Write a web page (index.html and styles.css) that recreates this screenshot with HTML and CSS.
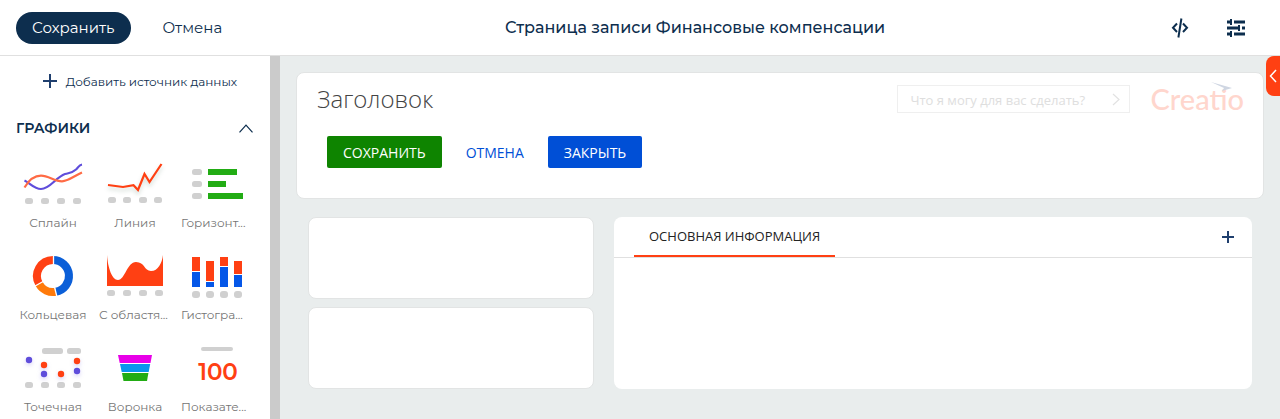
FILE: index.html
```html
<!DOCTYPE html>
<html lang="ru">
<head>
<meta charset="utf-8">
<meta name="viewport" content="width=device-width, initial-scale=1">
<title>Страница записи Финансовые компенсации</title>
<link rel="stylesheet" href="styles.css">
</head>
<body class="page">
<header class="topbar">
  <button class="pill pill-primary" type="button">Сохранить</button>
  <button class="pill" type="button">Отмена</button>
  <h1 class="topbar-title">Страница записи Финансовые компенсации</h1>
  <div class="topbar-tools">
    <button class="tool" type="button" aria-label="Исходный код">
      <svg width="18" height="20" viewBox="0 0 18 20" fill="none" stroke="#0d2e4e" stroke-width="2"><path d="M6 5.500L2 9.800L6 14M12 5.500L16 9.800L12 14M10.400 .5L7.400 19.500"/></svg>
    </button>
    <button class="tool" type="button" aria-label="Настройки">
      <svg width="18" height="18" viewBox="0 0 18 18" fill="#0d2e4e"><path d="M0 1.500h3v3H0zM3 0h2v6H3zM7 1.500h11v3H7zM0 7.500h11v3H0zM11 6h2v6h-2zM15 7.500h3v3h-3zM0 13.500h3v3H0zM3 12h2v6H3zM7 13.500h11v3H7z"/></svg>
    </button>
  </div>
</header>
<div class="workspace">
  <aside class="sidebar">
    <button class="add-source" type="button">
      <svg width="14" height="14" viewBox="0 0 14 14" stroke="#1f3f6e" stroke-width="2"><path d="M7 0v14M0 7h14"/></svg>
      Добавить источник данных
    </button>
    <button class="group-head" type="button" aria-expanded="true">
      ГРАФИКИ
      <svg width="14" height="9" viewBox="0 0 14 9" fill="none" stroke="#0d2e4e" stroke-width="1.200"><path d="M.5 8.300L7 1.200L13.500 8.300"/></svg>
    </button>
    <ul class="tiles">
      <li class="tile">
        <svg class="tile-icon" viewBox="0 0 72 54" fill="none">
          <path d="M7.500 20.500C13 23 17 29 24 29C33 29 39 17 48 14C54 12.500 55 13 59 9.500C62 6.500 62 5 65 4.500" stroke="#5f4ddb" stroke-width="2.200"/>
          <path d="M7.500 27.500C12 20 17 15.700 24 15.700C32 15.700 37 21.300 45 21.300C51 21.300 58 15.500 65 12.500" stroke="#ff6b45" stroke-width="2.200"/>
          <g fill="#d0d0d0"><rect x="8" y="38" width="8" height="6" rx="2.500"/><rect x="24" y="38" width="8" height="6" rx="2.500"/><rect x="40" y="38" width="8" height="6" rx="2.500"/><rect x="56" y="38" width="8" height="6" rx="2.500"/></g>
        </svg>
        <span class="tile-label">Сплайн</span>
      </li>
      <li class="tile">
        <svg class="tile-icon" viewBox="0 0 72 54" fill="none">
          <path class="glow" d="M9 25L24 27L34.500 25.200L39 30L45.500 14L50.500 22L62.500 4" stroke="#ff4013" stroke-width="2.200"/>
          <g fill="#d0d0d0"><rect x="9" y="37" width="8" height="6" rx="2.500"/><rect x="24" y="37" width="8" height="6" rx="2.500"/><rect x="40" y="37" width="8" height="6" rx="2.500"/><rect x="55" y="37" width="8" height="6" rx="2.500"/></g>
        </svg>
        <span class="tile-label">Линия</span>
      </li>
      <li class="tile">
        <svg class="tile-icon" viewBox="0 0 72 54">
          <g fill="#d0d0d0"><rect x="11" y="9" width="10" height="6" rx="2.500"/><rect x="11" y="21" width="10" height="6" rx="2.500"/><rect x="11" y="33" width="10" height="6" rx="2.500"/></g>
          <path fill="#22ac14" d="M27 9h29v6H27zM27 21h18v6H27zM27 33h35v6H27z"/>
        </svg>
        <span class="tile-label tile-label-cut">Горизонт...</span>
      </li>
      <li class="tile">
        <svg class="tile-icon" viewBox="0 0 72 54" fill="none">
          <path d="M36 8A16 16 0 0 1 38.800 39.750" stroke="#0b5fd8" stroke-width="8"/>
          <path d="M38.800 39.750A16 16 0 0 1 22.140 32" stroke="#ff7a0a" stroke-width="8"/>
          <path d="M22.140 32A16 16 0 0 1 36 8" stroke="#ff4013" stroke-width="8"/>
          <path d="M36.500 3V13M37.500 35L40 45M27 29L18 34" stroke="#fff" stroke-width="1.300"/>
        </svg>
        <span class="tile-label">Кольцевая</span>
      </li>
      <li class="tile">
        <svg class="tile-icon" viewBox="0 0 72 54">
          <path fill="#ff4013" d="M8 3C9 16 13 28 19 28C26 28 28 10 37 10C46 10 45 19 52 19C59 19 63 11 64 3V34H8z"/>
          <g fill="#d0d0d0"><rect x="8" y="38" width="8" height="6" rx="2.500"/><rect x="24" y="38" width="8" height="6" rx="2.500"/><rect x="40" y="38" width="8" height="6" rx="2.500"/><rect x="56" y="38" width="8" height="6" rx="2.500"/></g>
        </svg>
        <span class="tile-label tile-label-cut">С областя...</span>
      </li>
      <li class="tile">
        <svg class="tile-icon" viewBox="0 0 72 54">
          <path fill="#ff4013" d="M11 5h8v14h-8zM25 9h8v20h-8zM39 5h8v9h-8zM53 9h8v13h-8z"/>
          <path fill="#0557e8" d="M11 20h8v15h-8zM25 30h8v5h-8zM39 15h8v20h-8zM53 23h8v12h-8z"/>
          <g fill="#d0d0d0"><rect x="11" y="39" width="8" height="7" rx="3"/><rect x="25" y="39" width="8" height="7" rx="3"/><rect x="39" y="39" width="8" height="7" rx="3"/><rect x="53" y="39" width="8" height="7" rx="3"/></g>
        </svg>
        <span class="tile-label tile-label-cut">Гистогра...</span>
      </li>
      <li class="tile">
        <svg class="tile-icon" viewBox="0 0 72 54">
          <g fill="#d0d0d0"><rect x="25" y="4" width="21" height="6" rx="2.500"/><rect x="50" y="4" width="14" height="6" rx="2.500"/><rect x="8" y="38" width="8" height="6" rx="2.500"/><rect x="24" y="38" width="8" height="6" rx="2.500"/><rect x="40" y="38" width="8" height="6" rx="2.500"/><rect x="56" y="38" width="8" height="6" rx="2.500"/></g>
          <g class="glow-violet" fill="#5f4ddb"><circle cx="12" cy="16" r="3.200"/><circle cx="27" cy="30" r="3.200"/><circle cx="60" cy="27" r="3.200"/></g>
          <g class="glow-violet" fill="#ff4013"><circle cx="27" cy="21" r="3.200"/><circle cx="44" cy="30" r="3.200"/><circle cx="60" cy="17" r="3.200"/></g>
        </svg>
        <span class="tile-label">Точечная</span>
      </li>
      <li class="tile">
        <svg class="tile-icon" viewBox="0 0 72 54">
          <path fill="#e800e8" d="M19 11H53L51.500 19H20.700z"/>
          <path fill="#0a94ee" d="M21 20H51.200L49.700 28H22.700z"/>
          <path fill="#22ac14" d="M23 29H49.400L48 37H24.500z"/>
        </svg>
        <span class="tile-label">Воронка</span>
      </li>
      <li class="tile">
        <svg class="tile-icon" viewBox="0 0 72 54">
          <rect x="20" y="3" width="32" height="4" rx="2" fill="#d0d0d0"/>
          <text class="metric" x="37" y="36" text-anchor="middle">100</text>
        </svg>
        <span class="tile-label tile-label-cut">Показате...</span>
      </li>
    </ul>
  </aside>
  <main class="canvas">
    <button class="drawer-toggle" type="button" aria-label="Открыть панель">
      <svg width="8" height="14" viewBox="0 0 8 14" fill="none" stroke="#fff" stroke-width="1.500"><path d="M7 1L1.500 7L7 13"/></svg>
    </button>
    <section class="card page-head">
      <div class="head-row">
        <h2 class="head-title">Заголовок</h2>
        <form class="command">
          <input class="command-input" type="text" placeholder="Что я могу для вас сделать?" aria-label="Что я могу для вас сделать?">
          <button class="command-run" type="button" aria-label="Выполнить">
            <svg width="8" height="13" viewBox="0 0 8 13" fill="none" stroke="#e2e2e2" stroke-width="1.200"><path d="M1 1L7 6.500L1 12"/></svg>
          </button>
        </form>
        <div class="logo">Creatio<svg class="logo-arrow" width="21" height="9" viewBox="0 0 21 9" fill="#cfd6e2"><path d="M0 0L21 6L11 9L13 6z"/></svg></div>
      </div>
      <div class="actions">
        <button class="action action-save" type="button">СОХРАНИТЬ</button>
        <button class="action" type="button">ОТМЕНА</button>
        <button class="action action-close" type="button">ЗАКРЫТЬ</button>
      </div>
    </section>
    <div class="columns">
      <div class="side-cards">
        <section class="card slot"></section>
        <section class="card slot"></section>
      </div>
      <section class="tab-panel">
        <div class="tab-bar">
          <button class="tab" type="button">ОСНОВНАЯ ИНФОРМАЦИЯ</button>
          <button class="tab-add" type="button" aria-label="Добавить вкладку">
            <svg width="12" height="12" viewBox="0 0 12 12" stroke="#1f3f6e" stroke-width="2"><path d="M6 0v12M0 6h12"/></svg>
          </button>
        </div>
      </section>
    </div>
  </main>
</div>
</body>
</html>
```

FILE: styles.css
```css
* { box-sizing: border-box; }

.page {
  margin: 0;
  min-height: 100vh;
  display: flex;
  flex-direction: column;
  overflow: hidden;
  background: #fff;
  color: #0d2e4e;
  font-family: Montserrat, Inter, "Open Sans", sans-serif;
}

button {
  margin: 0;
  padding: 0;
  border: 0;
  background: none;
  color: inherit;
  font: inherit;
  cursor: pointer;
}

h1, h2, ul { margin: 0; padding: 0; }
svg { display: block; flex: none; }

.topbar {
  display: flex;
  align-items: center;
  gap: 16px;
  height: 56px;
  padding: 0 16px;
  border-bottom: 1px solid #e0e0e0;
}
.pill {
  height: 32px;
  padding: 0 16px;
  border-radius: 16px;
  font-size: 15px;
  white-space: nowrap;
}
.pill-primary { background: #0d2e4e; color: #fff; }
.topbar-title {
  flex: 1;
  text-align: center;
  font-size: 16px;
  font-weight: 500;
  white-space: nowrap;
}
.topbar-tools { display: flex; }
.tool {
  display: flex;
  align-items: center;
  justify-content: center;
  width: 56px;
  height: 32px;
}

.workspace { flex: 1; display: flex; }

.sidebar {
  flex: none;
  width: 280px;
  height: calc(100vh - 56px);
  overflow: hidden;
  border-right: 10px solid #cbcbcb;
}
.add-source {
  display: flex;
  align-items: center;
  justify-content: center;
  gap: 9px;
  width: 100%;
  height: 50px;
  padding-left: 10px;
  font-size: 12px;
}
.group-head {
  display: flex;
  align-items: center;
  justify-content: space-between;
  width: 100%;
  height: 44px;
  padding: 0 17px 0 16px;
  font-size: 14px;
  font-weight: 600;
}
.tiles {
  display: grid;
  grid-template-columns: repeat(3, 72px);
  gap: 20px 10px;
  padding: 10px 17px;
  list-style: none;
}
.tile-icon { width: 72px; height: 54px; }
.tile-label {
  display: block;
  overflow: hidden;
  line-height: 18px;
  font-size: 12px;
  text-align: center;
  white-space: nowrap;
  color: #757575;
}
.tile-label-cut { text-align: left; }
.metric { font-size: 23px; font-weight: 600; fill: #ff4013; }
.glow { filter: drop-shadow(0 3px 2px #0b3a1833); }
.glow-violet { filter: drop-shadow(0 2px 2px #5f4ddb40); }

.canvas {
  position: relative;
  flex: 1;
  min-width: 0;
  padding: 16px;
  background: #e9eded;
  font-family: "Open Sans", sans-serif;
}
.drawer-toggle {
  position: absolute;
  top: 0;
  right: 0;
  display: flex;
  align-items: center;
  justify-content: center;
  width: 14px;
  height: 40px;
  border-radius: 8px 0 0 8px;
  background: #ff4013;
}

.card {
  border: 1px solid #e2e4e4;
  border-radius: 8px;
  background: #fff;
}
.page-head { padding: 9px 19px 30px 20px; }
.head-row { display: flex; align-items: center; gap: 20px; }
.head-title {
  flex: 1;
  line-height: 34px;
  font-size: 24px;
  font-weight: 300;
  color: #444;
}
.command {
  display: flex;
  align-items: center;
  width: 233px;
  height: 28px;
  margin: 0;
  border: 1px solid #efefef;
}
.command-input {
  flex: 1;
  min-width: 0;
  padding: 2px 0 0 12px;
  border: 0;
  background: none;
  font: 13px "Open Sans", sans-serif;
}
.command-input::placeholder { color: #dedede; opacity: 1; }
.command-run { padding: 0 9px; }
.logo {
  position: relative;
  line-height: 34px;
  font-family: Lato, sans-serif;
  font-size: 29px;
  font-weight: 500;
  color: #ffd6cd;
}
.logo-arrow { position: absolute; top: 0; right: 12px; }

.actions { display: flex; gap: 8px; padding: 20px 10px 0; }
.action {
  height: 32px;
  padding: 0 16px;
  border-radius: 2px;
  font-size: 14px;
  color: #004fd6;
}
.action-save { background: #0e8400; color: #fff; }
.action-close { background: #004fd6; color: #fff; }

.columns {
  display: grid;
  grid-template-columns: 13fr 29fr;
  gap: 20px;
  padding: 18px 12px 0;
}
.side-cards { display: grid; gap: 8px; }
.slot { min-height: 82px; }
.tab-panel { border-radius: 8px; background: #fff; }
.tab-bar {
  display: flex;
  align-items: center;
  justify-content: space-between;
  height: 41px;
  padding: 0 18px 0 20px;
  border-bottom: 1px solid #e0e0e0;
}
.tab {
  align-self: stretch;
  padding: 0 15px;
  border-bottom: 2px solid #ff4013;
  font-size: 13px;
  color: #222;
}
```
